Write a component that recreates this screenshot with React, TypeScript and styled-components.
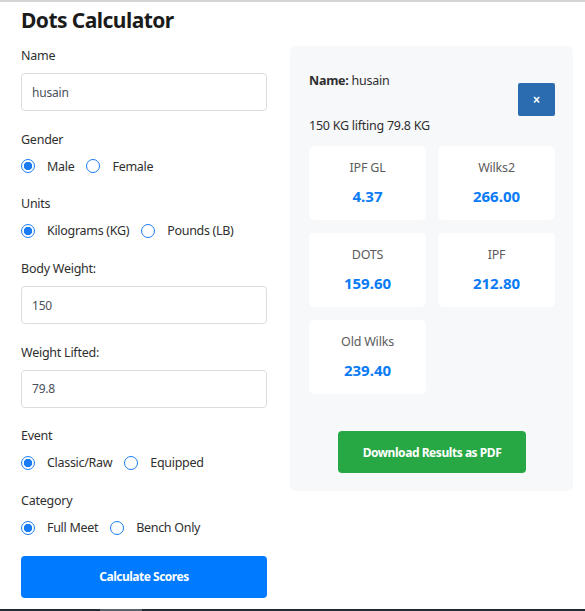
import React, { useState } from 'react';
import styled, { createGlobalStyle } from 'styled-components';

const GlobalStyle = createGlobalStyle`
  html, body {
    margin: 0;
    padding: 0;
    background: #ffffff;
  }
  body {
    border-top: 2px solid #d4d4d4;
    font-family: "Noto Sans", "Open Sans", Arial, sans-serif;
    color: #333333;
  }
`;

const Page = styled.div`
  padding: 0 12px 0 21px;
`;

const Title = styled.h1`
  margin: 3px 0 11px;
  font-size: 21px;
  line-height: 30px;
  font-weight: 700;
  letter-spacing: -0.55px;
  color: #1b1b1b;
`;

const Layout = styled.div`
  display: grid;
  grid-template-columns: 246px 283px;
  column-gap: 23px;
  align-items: start;
`;

const Form = styled.form`
  display: flex;
  flex-direction: column;
`;

const Group = styled.div`
  margin-bottom: 18.7px;
`;

const Label = styled.label`
  display: block;
  font-size: 12.5px;
  line-height: 20px;
  letter-spacing: -0.25px;
  margin-bottom: 7px;
  color: #2f2f2f;
`;

const Input = styled.input`
  box-sizing: border-box;
  width: 100%;
  height: 38px;
  padding: 0 10px;
  border: 1px solid #dcdcdc;
  border-radius: 4px;
  font-family: inherit;
  font-size: 12px;
  letter-spacing: -0.2px;
  color: #4a4f5a;
  outline: none;
`;

const RadioRow = styled.div`
  display: flex;
  align-items: center;
  height: 19px;
`;

const RadioOption = styled.label`
  display: inline-flex;
  align-items: center;
  gap: 12px;
  margin-right: 12px;
  font-size: 12.5px;
  letter-spacing: -0.3px;
  color: #2f2f2f;
  cursor: pointer;
`;

const RadioDot = styled.span<{ $checked: boolean }>`
  box-sizing: border-box;
  width: 14px;
  height: 14px;
  border-radius: 50%;
  border: 1.5px solid #1a7cf2;
  background: ${p => (p.$checked ? 'radial-gradient(circle, #1a7cf2 0 3.9px, #fff 4.5px)' : '#fff')};
`;

const HiddenRadio = styled.input`
  display: none;
`;

const PrimaryButton = styled.button`
  height: 42px;
  width: 100%;
  border: none;
  border-radius: 4px;
  background: #007bff;
  color: #ffffff;
  font-family: inherit;
  font-size: 12px;
  font-weight: 700;
  letter-spacing: -0.5px;
  cursor: pointer;
`;

const Panel = styled.div`
  background: #f7f8fa;
  border-radius: 6px;
  padding: 25px 18px 18px 19px;
  display: flex;
  flex-direction: column;
`;

const PanelHeader = styled.div`
  display: flex;
  justify-content: space-between;
  align-items: flex-start;
`;

const Line = styled.p`
  margin: 0;
  font-size: 12.5px;
  line-height: 20px;
  letter-spacing: -0.25px;
  color: #2f2f2f;

  strong {
    font-weight: 700;
  }
`;

const CloseButton = styled.button`
  margin-top: 12px;
  width: 37px;
  height: 33px;
  border: none;
  border-radius: 2px;
  background: #2b6cb0;
  color: #ffffff;
  font-size: 12px;
  font-weight: 700;
  line-height: 1;
  cursor: pointer;
`;

const Cards = styled.div`
  margin-top: 10px;
  display: grid;
  grid-template-columns: 1fr 1fr;
  gap: 13px 12px;
`;

const Card = styled.div`
  background: #ffffff;
  border-radius: 5px;
  padding: 12px 8px 14px;
  text-align: center;
`;

const CardLabel = styled.div`
  font-size: 12.5px;
  line-height: 20px;
  letter-spacing: -0.2px;
  color: #5c5c5c;
`;

const CardValue = styled.div`
  margin-top: 8px;
  font-size: 15px;
  line-height: 20px;
  font-weight: 700;
  color: #0a7bf5;
`;

const DownloadButton = styled.button`
  align-self: center;
  margin-top: 37px;
  height: 42px;
  padding: 0 25px;
  border: none;
  border-radius: 4px;
  background: #28a745;
  color: #ffffff;
  font-family: inherit;
  font-size: 12px;
  font-weight: 700;
  letter-spacing: -0.45px;
  cursor: pointer;
`;

const ScrollBar = styled.div`
  position: fixed;
  left: 0;
  right: 0;
  bottom: 0;
  height: 2px;
  background: #1f2a32;

  &::after {
    content: "";
    position: absolute;
    left: 100px;
    width: 42px;
    top: 0;
    bottom: 0;
    background: #59636b;
  }
`;

type RadioGroupProps = {
  name: string;
  options: string[];
  value: string;
  onChange: (v: string) => void;
};

const RadioGroup = ({ name, options, value, onChange }: RadioGroupProps) => (
  <RadioRow>
    {options.map(opt => (
      <RadioOption key={opt}>
        <HiddenRadio type="radio" name={name} checked={value === opt} onChange={() => onChange(opt)} />
        <RadioDot $checked={value === opt} />
        {opt}
      </RadioOption>
    ))}
  </RadioRow>
);

const scores = [
  { label: 'IPF GL', value: '4.37' },
  { label: 'Wilks2', value: '266.00' },
  { label: 'DOTS', value: '159.60' },
  { label: 'IPF', value: '212.80' },
  { label: 'Old Wilks', value: '239.40' },
];

export default function App() {
  const [name, setName] = useState('husain');
  const [gender, setGender] = useState('Male');
  const [units, setUnits] = useState('Kilograms (KG)');
  const [bodyWeight, setBodyWeight] = useState('150');
  const [lifted, setLifted] = useState('79.8');
  const [event, setEvent] = useState('Classic/Raw');
  const [category, setCategory] = useState('Full Meet');

  return (
    <>
      <GlobalStyle />
      <Page>
        <Title>Dots Calculator</Title>
        <Layout>
          <Form onSubmit={e => e.preventDefault()}>
            <Group>
              <Label>Name</Label>
              <Input value={name} onChange={e => setName(e.target.value)} />
            </Group>
            <Group>
              <Label>Gender</Label>
              <RadioGroup name="gender" options={['Male', 'Female']} value={gender} onChange={setGender} />
            </Group>
            <Group>
              <Label>Units</Label>
              <RadioGroup name="units" options={['Kilograms (KG)', 'Pounds (LB)']} value={units} onChange={setUnits} />
            </Group>
            <Group>
              <Label>Body Weight:</Label>
              <Input value={bodyWeight} onChange={e => setBodyWeight(e.target.value)} />
            </Group>
            <Group>
              <Label>Weight Lifted:</Label>
              <Input value={lifted} onChange={e => setLifted(e.target.value)} />
            </Group>
            <Group>
              <Label>Event</Label>
              <RadioGroup name="event" options={['Classic/Raw', 'Equipped']} value={event} onChange={setEvent} />
            </Group>
            <Group>
              <Label>Category</Label>
              <RadioGroup name="category" options={['Full Meet', 'Bench Only']} value={category} onChange={setCategory} />
            </Group>
            <PrimaryButton type="submit">Calculate Scores</PrimaryButton>
          </Form>

          <Panel>
            <PanelHeader>
              <Line>
                <strong>Name:</strong> husain
              </Line>
              <CloseButton>×</CloseButton>
            </PanelHeader>
            <Line>150 KG lifting 79.8 KG</Line>
            <Cards>
              {scores.map(s => (
                <Card key={s.label}>
                  <CardLabel>{s.label}</CardLabel>
                  <CardValue>{s.value}</CardValue>
                </Card>
              ))}
            </Cards>
            <DownloadButton>Download Results as PDF</DownloadButton>
          </Panel>
        </Layout>
      </Page>
      <ScrollBar />
    </>
  );
}
